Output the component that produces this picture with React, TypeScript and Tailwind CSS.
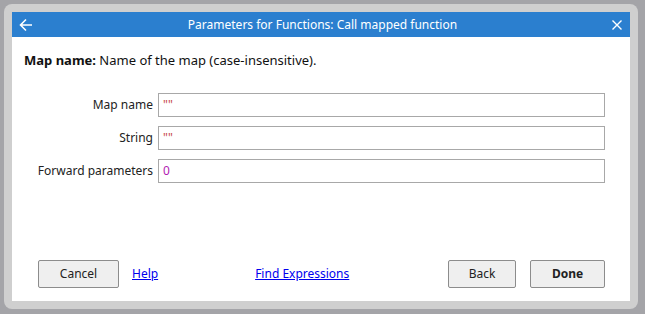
import React from "react";

const font = { fontFamily: '"Noto Sans", "Open Sans", sans-serif' };

interface Row {
  label: string;
  value: string;
  kind: "string" | "number";
}

const rows: Row[] = [
  { label: "Map name", value: '""', kind: "string" },
  { label: "String", value: '""', kind: "string" },
  { label: "Forward parameters", value: "0", kind: "number" },
];

function Button({ children, bold }: { children: React.ReactNode; bold?: boolean }) {
  return (
    <button
      className={
        "h-[28px] rounded-[2px] border border-[#8c8c8c] bg-[#efefef] text-[12px] text-[#222] " +
        (bold ? "font-bold" : "")
      }
    >
      {children}
    </button>
  );
}

export default function App() {
  return (
    <div className="w-[645px] h-[314px] bg-[#a4a4a8] pt-1 pl-1 overflow-hidden" style={font}>
      <div className="w-[634px] h-[305px] rounded-lg bg-[#cfcfcf] p-2">
        <div className="flex h-full flex-col bg-white">
          {/* title bar */}
          <div className="flex h-[25px] items-center bg-[#2b7fcf] text-white">
            <svg className="ml-[7px] h-[14px] w-[14px]" viewBox="0 0 14 14" fill="none" stroke="white" strokeWidth={1.6}>
              <path d="M13 7H1.5M7 1.5L1.5 7L7 12.5" />
            </svg>
            <div className="flex-1 text-center text-[12px] leading-none">
              Parameters for Functions: Call mapped function
            </div>
            <svg className="mr-[8px] h-[10px] w-[10px]" viewBox="0 0 10 10" stroke="white" strokeWidth={1.4}>
              <path d="M0.5 0.5L9.5 9.5M9.5 0.5L0.5 9.5" />
            </svg>
          </div>

          {/* body */}
          <div className="flex flex-1 flex-col pl-3 pt-[14px] pb-[13px]">
            <p className="text-[13px] leading-[18px] text-[#111]">
              <span className="font-bold">Map name:</span> Name of the map (case-insensitive).
            </p>

            <div className="mt-[24px] flex flex-col gap-[9px]">
              {rows.map((r) => (
                <div key={r.label} className="flex items-center">
                  <div className="w-[129px] text-right text-[12px] text-[#222]">{r.label}</div>
                  <div className="ml-[5px] flex h-[24px] w-[447px] items-center border border-[#a8a8a8] pl-[4px] text-[12px]">
                    <span className={r.kind === "string" ? "text-[#c8484a]" : "text-[#b21ab2]"}>{r.value}</span>
                  </div>
                </div>
              ))}
            </div>

            <div className="mt-auto flex items-center">
              <div className="ml-[14px] flex w-[81px]">
                <Button>
                  <span className="block w-[79px]">Cancel</span>
                </Button>
              </div>
              <a className="ml-[13px] text-[12px] text-[#0000ee] underline">Help</a>
              <a className="ml-[97px] text-[12px] text-[#0000ee] underline">Find Expressions</a>
              <div className="ml-auto mr-[25px] flex gap-[14px]">
                <Button>
                  <span className="block w-[66px]">Back</span>
                </Button>
                <Button bold>
                  <span className="block w-[73px]">Done</span>
                </Button>
              </div>
            </div>
          </div>
        </div>
      </div>
    </div>
  );
}
